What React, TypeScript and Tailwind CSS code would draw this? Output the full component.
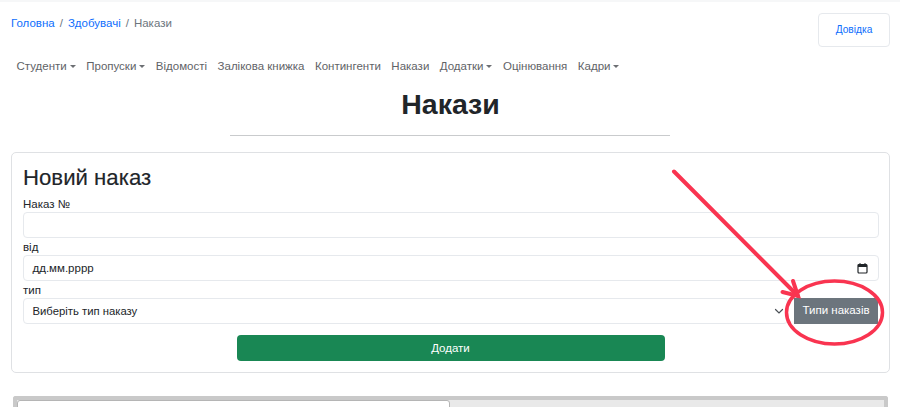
import React from 'react';

const navItems = [
  { label: 'Студенти', caret: true },
  { label: 'Пропуски', caret: true },
  { label: 'Відомості' },
  { label: 'Залікова книжка' },
  { label: 'Контингенти' },
  { label: 'Накази' },
  { label: 'Додатки', caret: true },
  { label: 'Оцінювання' },
  { label: 'Кадри', caret: true },
];

const Caret = () => (
  <span className="ml-[3px] inline-block w-0 h-0 border-x-[3.5px] border-x-transparent border-t-[3.5px] border-t-[#6c6f73] align-[2px]" />
);

const inputBox = 'h-[26px] border border-[#e6e9ed] rounded-[4px] bg-white';
const labelText = 'block pt-[1px] text-[11.5px] leading-[16px]';

export default function App() {
  return (
    <div className="relative w-[900px] h-[407px] overflow-hidden bg-white text-[#212529] font-['Liberation_Sans','Noto_Sans',sans-serif]">
      <div className="h-[2px] bg-[#f6f7f8]" />

      {/* Breadcrumb + help button */}
      <div className="flex justify-between items-start pl-[11px] pr-[10px] pt-[11px] h-[47px]">
        <div className="flex text-[11.5px] leading-[18px] pt-[1px] gap-[5px]">
          <a className="text-[#0d6efd]">Головна</a>
          <span className="text-[#6c757d]">/</span>
          <a className="text-[#0d6efd]">Здобувачі</a>
          <span className="text-[#6c757d]">/</span>
          <span className="text-[#6c757d]">Накази</span>
        </div>
        <button className="w-[72px] h-[34px] border border-[#e6e9ed] rounded-[4px] text-[10.2px] text-[#0d6efd] bg-white">
          Довідка
        </button>
      </div>

      {/* Nav */}
      <nav className="flex gap-[10.5px] pl-[16.5px] mt-[8px] h-[18px] text-[11.5px] leading-[18px] text-[#5f6367]">
        {navItems.map((item) => (
          <a key={item.label} className="whitespace-nowrap">
            {item.label}
            {item.caret && <Caret />}
          </a>
        ))}
      </nav>

      <h1 className="mt-[12px] pl-[1px] text-center text-[28.500px] leading-[34px] font-bold">Накази</h1>
      <hr className="mx-auto mt-[14px] w-[440px] border-t border-[#c9cbcd]" />

      {/* New order card */}
      <div className="mt-[16px] mx-[11px] w-[879px] h-[221px] border border-[#dfe1e4] rounded-[5px] px-[11px] pt-[10px]">
        <h2 className="text-[22.2px] leading-[29px] font-normal [-webkit-text-stroke:0.15px_#212529]">Новий наказ</h2>
        <label className="block mt-[3px] pt-[1px] text-[11.5px] leading-[16px]">Наказ №</label>
        <input className={`block w-[856px] ${inputBox}`} />
        <label className={labelText}>від</label>
        <div className={`flex items-center justify-between w-[856px] pl-[8.5px] pr-[10px] text-[11.5px] ${inputBox}`}>
          <span className="pt-[1px]">дд.мм.рррр</span>
          <svg width="11" height="11" viewBox="0 0 11 11" fill="none">
            <rect x="1" y="1.5" width="9" height="8.5" rx="1" stroke="#212529" strokeWidth="1.2" />
            <rect x="1" y="1.5" width="9" height="2.5" fill="#212529" />
            <path d="M3 0v2M8 0v2" stroke="#212529" strokeWidth="1" />
          </svg>
        </div>
        <label className={labelText}>тип</label>
        <div className="flex gap-[6px]">
          <div className={`flex items-center justify-between w-[766px] pl-[8.5px] pr-[3px] text-[11.3px] ${inputBox}`}>
            <span>Виберіть тип наказу</span>
            <svg width="10" height="7" viewBox="0 0 10 7" fill="none">
              <path d="M1.5 1.5L5 5l3.5-3.5" stroke="#4b5056" strokeWidth="1.2" strokeLinecap="round" />
            </svg>
          </div>
          <button className="w-[84px] h-[26px] bg-[#6c757d] text-white text-[11.5px]">Типи наказів</button>
        </div>
        <button className="block mx-auto mt-[11px] pt-[1px] w-[428px] h-[26px] rounded-[4px] bg-[#198754] text-white text-[11.5px]">
          Додати
        </button>
      </div>

      {/* Tabs strip cut off by the bottom of the window */}
      <div className="mt-[23px] ml-[13px] w-[875px] h-[40px] bg-[#e9e9e9] border-[4px] border-b-0 border-[#c9c9c9] rounded-t-[3px]">
        <div className="w-[433px] h-[40px] bg-white border border-[#b5b5b5] rounded-t-[3px]" />
      </div>

      {/* Red annotation drawn over the screenshot */}
      <svg className="absolute left-0 top-0 pointer-events-none" width="900" height="407" fill="none">
        <g stroke="#f93450" strokeLinecap="round">
          <path d="M674 171.500L798 296" strokeWidth="4" />
          <path d="M793 281L798 296L782.500 292" strokeWidth="4" />
          <ellipse cx="834.500" cy="312.500" rx="48" ry="31.500" strokeWidth="3.500" />
        </g>
      </svg>
    </div>
  );
}
